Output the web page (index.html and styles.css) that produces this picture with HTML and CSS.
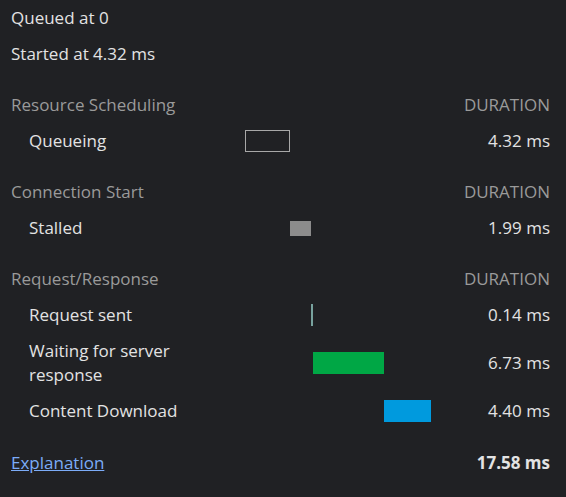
FILE: index.html
```html
<!DOCTYPE html>
<html>
<head>
<meta charset="utf-8">
<link rel="stylesheet" href="styles.css">
</head>
<body>
<div class="panel">
  <div class="summary">Queued at 0</div>
  <div class="summary">Started at 4.32 ms</div>

  <div class="section">
    <div class="row head"><span class="label">Resource Scheduling</span><span class="track"></span><span class="value">DURATION</span></div>
    <div class="row"><span class="label item">Queueing</span><span class="track"><span class="bar queueing" style="margin-left:0%;width:24.3%"></span></span><span class="value">4.32 ms</span></div>
  </div>

  <div class="section">
    <div class="row head"><span class="label">Connection Start</span><span class="track"></span><span class="value">DURATION</span></div>
    <div class="row"><span class="label item">Stalled</span><span class="track"><span class="bar stalled" style="margin-left:24.3%;width:11.32%"></span></span><span class="value">1.99 ms</span></div>
  </div>

  <div class="section">
    <div class="row head"><span class="label">Request/Response</span><span class="track"></span><span class="value">DURATION</span></div>
    <div class="row"><span class="label item">Request sent</span><span class="track"><span class="bar sending" style="margin-left:35.62%;width:0.8%"></span></span><span class="value">0.14 ms</span></div>
    <div class="row"><span class="label item">Waiting for server response</span><span class="track"><span class="bar waiting" style="margin-left:36.69%;width:38.28%"></span></span><span class="value">6.73 ms</span></div>
    <div class="row"><span class="label item">Content Download</span><span class="track"><span class="bar download" style="margin-left:74.97%;width:25.03%"></span></span><span class="value">4.40 ms</span></div>
  </div>

  <div class="footer">
    <a class="link" href="#">Explanation</a>
    <span class="total">17.58 ms</span>
  </div>
</div>
</body>
</html>
```

FILE: styles.css
```css
html, body {
  margin: 0;
  padding: 0;
  background: #202124;
}
body {
  font-family: "Open Sans", "Noto Sans", sans-serif;
  font-size: 17px;
  color: #e3e3e3;
  height: 497px;
}
.panel {
  padding: 0 16px 0 11px;
}
.summary {
  height: 36px;
  line-height: 24px;
  padding: 6px 0;
  box-sizing: border-box;
}
.section {
  margin-top: 15px;
}
.row {
  display: grid;
  grid-template-columns: 234px 186px 1fr;
  align-items: center;
  min-height: 36px;
  line-height: 24px;
  padding: 6px 0;
  box-sizing: border-box;
}
.head {
  color: #9a9a9a;
}
.label.item {
  padding-left: 18px;
  max-width: 190px;
}
.track {
  display: flex;
  align-items: center;
  height: 22px;
}
.bar {
  display: block;
  height: 22px;
  box-sizing: border-box;
  flex: none;
}
.queueing {
  border: 1px solid #a8a8a8;
}
.stalled {
  background: #8c8c8c;
  height: 15px;
}
.sending {
  background: #78a29e;
  min-width: 2px;
}
.waiting {
  background: #00a745;
}
.download {
  background: #009ade;
}
.value {
  text-align: right;
}
.footer {
  margin-top: 16px;
  height: 36px;
  display: flex;
  justify-content: space-between;
  align-items: center;
  line-height: 24px;
}
.link {
  color: #7cacf8;
  text-decoration: underline;
}
.total {
  font-weight: bold;
}
```
